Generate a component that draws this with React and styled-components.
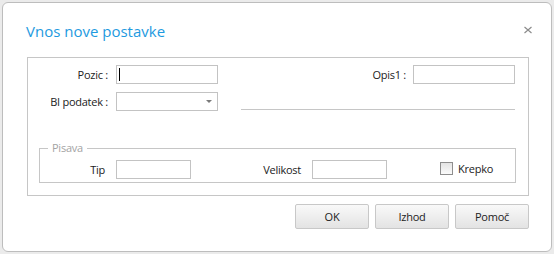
import React from "react";
import styled, { createGlobalStyle } from "styled-components";

const Global = createGlobalStyle`
  html, body { margin: 0; padding: 0; }
  body {
    background: #ebebeb;
    font-family: "Open Sans", "Noto Sans", sans-serif;
    font-size: 11px;
    letter-spacing: -0.25px;
    color: #222;
  }
  #root { padding: 2px; }
`;

const Dialog = styled.div`
  box-sizing: border-box;
  width: 550px;
  height: 250px;
  background: #fff;
  border: 1px solid #bdbdbd;
  border-radius: 6px;
  padding: 0 22px 0 24px;
  display: flex;
  flex-direction: column;
`;

const Header = styled.div`
  height: 54px;
  display: flex;
  align-items: center;
  justify-content: space-between;
`;

const Title = styled.div`
  font-size: 15px;
  letter-spacing: 0;
  color: #1e9ae0;
  margin-left: -1px;
  margin-top: 1px;
`;

const Close = styled.button`
  border: 0;
  background: none;
  padding: 0;
  margin-right: -4px;
  width: 10px;
  height: 8px;
  display: flex;
  cursor: pointer;
`;

const Panel = styled.div`
  border: 1px solid #c6c6c6;
  padding: 7px 13px 12px 0;
  display: flex;
  flex-direction: column;
`;

const Row = styled.div`
  display: flex;
  align-items: center;
  height: 19px;
  margin-top: ${(p) => p.$top || 0}px;
`;

const Label = styled.div`
  width: ${(p) => p.$w}px;
  text-align: right;
  padding-right: ${(p) => p.$gap ?? 8}px;
  box-sizing: content-box;
  white-space: nowrap;
  color: #222;
`;

const TextBox = styled.div`
  box-sizing: border-box;
  width: ${(p) => p.$w}px;
  height: 19px;
  border: 1px solid #c3c3c3;
  background: #fff;
  position: relative;
  ${(p) =>
    p.$focused &&
    `&::before{content:"";position:absolute;left:2px;top:2px;width:1px;height:13px;background:#000;}`}
`;

const Select = styled(TextBox)`
  display: flex;
  align-items: center;
  justify-content: flex-end;
  padding-right: 5px;
`;

const Arrow = styled.span`
  width: 0;
  height: 0;
  border-left: 3px solid transparent;
  border-right: 3px solid transparent;
  border-top: 3px solid #7a7a7a;
`;

const Spacer = styled.div`
  flex: 1;
`;

const Rule = styled.div`
  flex: 1;
  align-self: flex-end;
  height: 1px;
  background: #c6c6c6;
  margin: 0 0 1px 23px;
`;

const Group = styled.div`
  position: relative;
  border: 1px solid #c6c6c6;
  margin: 37px -1px 0 11px;
  padding: 11px 0 3px 0;
`;

const Legend = styled.span`
  position: absolute;
  top: -9px;
  left: 8px;
  padding: 0 4px;
  background: #fff;
  color: #a3a3a3;
  line-height: 16px;
`;

const GroupRow = styled.div`
  display: flex;
  align-items: center;
  height: 19px;
`;

const CheckWrap = styled.label`
  display: flex;
  align-items: center;
  gap: 5px;
  margin-left: 53px;
  margin-top: -2px;
`;

const Box = styled.span`
  box-sizing: border-box;
  width: 13px;
  height: 13px;
  border: 1px solid #8e8e8e;
  background: linear-gradient(#e4e4e4, #fbfbfb);
`;

const Buttons = styled.div`
  display: flex;
  justify-content: flex-end;
  gap: 6px;
  margin-top: 8px;
`;

const Button = styled.button`
  box-sizing: border-box;
  width: 74px;
  height: 25px;
  border: 1px solid #c8c8c8;
  border-radius: 2px;
  background: linear-gradient(#f9f9f9, #e3e3e3);
  font-family: "Open Sans", "Noto Sans", sans-serif;
  font-size: 11px;
  letter-spacing: -0.25px;
  color: #222;
  padding: 0;
`;

export default function App() {
  return (
    <>
      <Global />
      <Dialog>
        <Header>
          <Title>Vnos nove postavke</Title>
          <Close aria-label="close">
            <svg width="10" height="8" viewBox="0 0 10 8">
              <path d="M1.5 1 L8.5 7 M8.5 1 L1.5 7" stroke="#8c8c8c" strokeWidth="1.2" fill="none" />
            </svg>
          </Close>
        </Header>
        <Panel>
          <Row>
            <Label $w={80}>Pozic :</Label>
            <TextBox $w={102} $focused />
            <Spacer />
            <Label $w={70} $gap={7}>Opis1 :</Label>
            <TextBox $w={102} />
          </Row>
          <Row $top={8}>
            <Label $w={80}>BI podatek :</Label>
            <Select $w={102}>
              <Arrow />
            </Select>
            <Rule />
          </Row>
          <Group>
            <Legend>Pisava</Legend>
            <GroupRow>
              <Label $w={65} $gap={11}>Tip</Label>
              <TextBox $w={75} />
              <Label $w={110} $gap={11}>Velikost</Label>
              <TextBox $w={75} />
              <CheckWrap>
                <Box />
                <span>Krepko</span>
              </CheckWrap>
            </GroupRow>
          </Group>
        </Panel>
        <Buttons>
          <Button>OK</Button>
          <Button>Izhod</Button>
          <Button>Pomoč</Button>
        </Buttons>
      </Dialog>
    </>
  );
}
